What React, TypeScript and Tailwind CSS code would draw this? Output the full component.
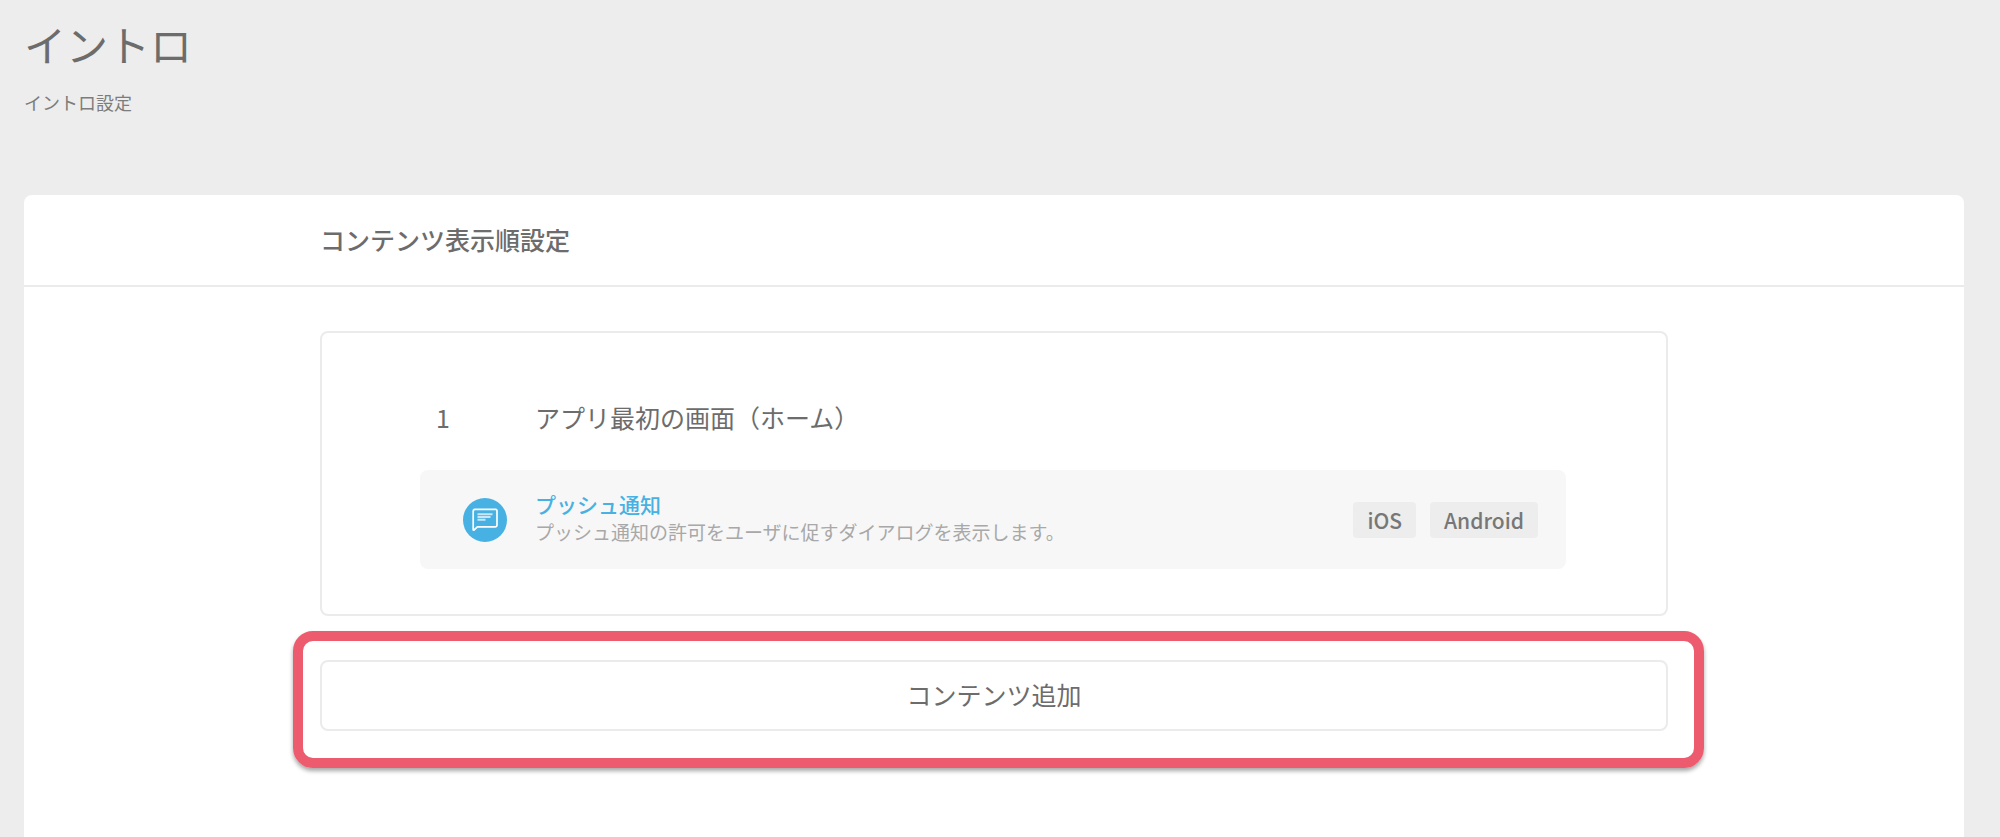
const platforms = ["iOS", "Android"];

function MessageIcon() {
  return (
    <svg width="26" height="24" viewBox="0 0 26 24" fill="none" stroke="#fff" strokeWidth="1.7" aria-hidden="true">
      <path d="M1.2 22V3.4a2 2 0 0 1 2-2h20.6a1.4 1.4 0 0 1 1.2 1.4v14.4a1.6 1.6 0 0 1-1.6 1.6H5.4L1.9 22.2z" strokeLinejoin="round" />
      <path d="M5.5 6.2h15M5.5 9h13M5.5 11.8h8" strokeWidth="2" strokeOpacity="0.7" />
    </svg>
  );
}

function PushItem() {
  return (
    <div className="flex h-[99px] items-center rounded-lg bg-[#f7f7f7] pr-7 pl-[43px]">
      <span className="flex size-11 shrink-0 items-center justify-center rounded-full bg-[#47b1e3]">
        <MessageIcon />
      </span>
      <div className="ml-7 flex-1 pb-1">
        <a href="#push" className="block text-[21px] leading-7 font-medium text-[#47b1e3]">
          プッシュ通知
        </a>
        <p className="text-[19px] leading-7 text-[#a8a8a8]">
          プッシュ通知の許可をユーザに促すダイアログを表示します。
        </p>
      </div>
      <ul className="flex gap-[14px]">
        {platforms.map((name) => (
          <li key={name} className="rounded-sm bg-[#ededed] px-[14px] text-[21px] leading-9 font-medium text-[#777]">
            {name}
          </li>
        ))}
      </ul>
    </div>
  );
}

export default function App() {
  return (
    <div className="flex min-h-screen flex-col bg-[#ededed] pr-9 pl-6 font-['Noto_Sans_CJK_JP',sans-serif] text-[#6c6c6c]">
      <header className="pt-3">
        <h1 className="text-[42px] leading-[64px]">イントロ</h1>
        <p className="mt-3 text-[18px] leading-7 text-[#7c7c7c]">イントロ設定</p>
      </header>

      <main className="mt-[79px] flex-1 rounded-t-lg bg-white">
        <div className="border-b-2 border-[#ebebeb]">
          <h2 className="mx-auto max-w-[1348px] pt-[26px] pb-7 text-[25px] leading-9 font-medium">
            コンテンツ表示順設定
          </h2>
        </div>

        <div className="mx-auto max-w-[1348px] pt-11 pb-16">
          <section className="rounded-lg border-2 border-[#ebebeb] pt-[66px] pr-[100px] pb-[45px] pl-[98px]">
            <div className="flex pb-[35px] text-[25px] leading-9">
              <span className="w-[115px] pl-4">1</span>
              <h3>アプリ最初の画面（ホーム）</h3>
            </div>
            <PushItem />
          </section>

          <div className="relative mt-11">
            <button type="button" className="h-[71px] w-full rounded-lg border-2 border-[#ebebeb] bg-white pb-1 text-[25px] leading-9">
              コンテンツ追加
            </button>
            <div className="pointer-events-none absolute -top-[29px] -right-9 -bottom-[37px] -left-[27px] rounded-[20px] border-10 border-[#ed5c6e] shadow-[0_3px_4px_rgba(0,0,0,0.35)]" />
          </div>
        </div>
      </main>
    </div>
  );
}
